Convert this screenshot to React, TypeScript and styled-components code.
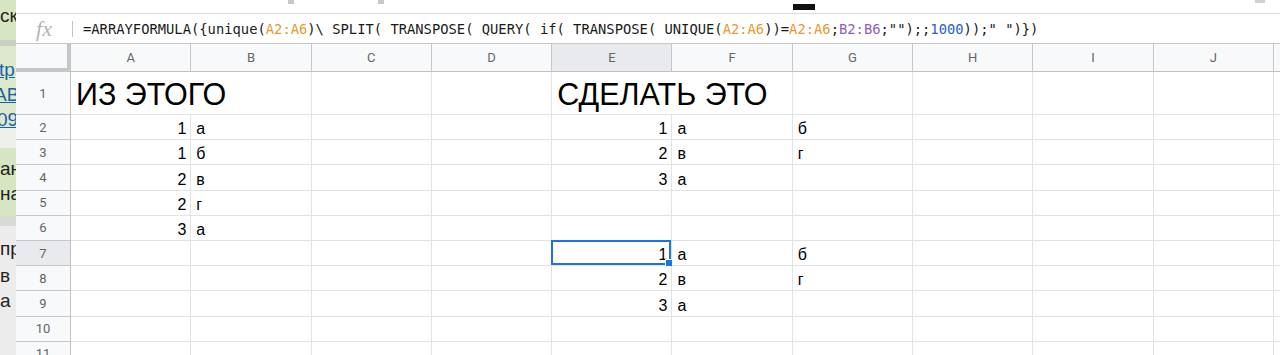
import React from 'react';
import styled, { createGlobalStyle } from 'styled-components';

const GlobalStyle = createGlobalStyle`
  html, body { margin: 0; padding: 0; background: #fff; }
  body {
    width: 1280px;
    height: 355px;
    overflow: hidden;
    font-family: "Liberation Sans", Arial, sans-serif;
  }
`;

const COLS = ['A', 'B', 'C', 'D', 'E', 'F', 'G', 'H', 'I', 'J', ''];
const ROWS = [1, 2, 3, 4, 5, 6, 7, 8, 9, 10, 11];

type CellData = { text: string; right?: boolean; big?: boolean; span?: number };

const DATA: Record<string, CellData> = {
  A1: { text: 'ИЗ ЭТОГО', big: true, span: 2 },
  E1: { text: 'СДЕЛАТЬ ЭТО', big: true, span: 2 },
  A2: { text: '1', right: true }, B2: { text: 'а' },
  A3: { text: '1', right: true }, B3: { text: 'б' },
  A4: { text: '2', right: true }, B4: { text: 'в' },
  A5: { text: '2', right: true }, B5: { text: 'г' },
  A6: { text: '3', right: true }, B6: { text: 'а' },
  E2: { text: '1', right: true }, F2: { text: 'а' }, G2: { text: 'б' },
  E3: { text: '2', right: true }, F3: { text: 'в' }, G3: { text: 'г' },
  E4: { text: '3', right: true }, F4: { text: 'а' },
  E7: { text: '1', right: true }, F7: { text: 'а' }, G7: { text: 'б' },
  E8: { text: '2', right: true }, F8: { text: 'в' }, G8: { text: 'г' },
  E9: { text: '3', right: true }, F9: { text: 'а' },
};

const SELECTED = { col: 'E', row: 7 };

const Page = styled.div`
  display: flex;
  width: 1280px;
  height: 355px;
  overflow: hidden;
`;

/* sliver of the browser window behind the spreadsheet */
const BehindStrip = styled.div`
  width: 16px;
  flex-shrink: 0;
  display: flex;
  flex-direction: column;
  overflow: hidden;
  box-shadow: inset -2px 0 2px rgba(0, 0, 0, 0.18);
  font-size: 19px;
  color: #222;
`;

const StripBlock = styled.div<{ $h: number; $bg: string; $pad?: number }>`
  height: ${(p) => p.$h}px;
  flex-shrink: 0;
  background: ${(p) => p.$bg};
  padding-top: ${(p) => p.$pad ?? 0}px;
  box-sizing: border-box;
  white-space: nowrap;
`;

const StripLine = styled.div<{ $link?: boolean; $shift?: number }>`
  height: 25px;
  line-height: 25px;
  margin-left: ${(p) => p.$shift ?? 0}px;
  color: ${(p) => (p.$link ? '#1b5fa8' : '#222')};
  text-decoration: ${(p) => (p.$link ? 'underline' : 'none')};
`;

const Sheet = styled.div`
  flex: 1;
  display: flex;
  flex-direction: column;
  min-width: 0;
  overflow: hidden;
`;

const Toolbar = styled.div`
  height: 14px;
  flex-shrink: 0;
  box-sizing: border-box;
  border-bottom: 1px solid #dadce0;
  display: flex;
  align-items: flex-start;
`;

const ToolMark = styled.div<{ $w: number; $h: number; $c: string; $ml: number; $mt?: number }>`
  width: ${(p) => p.$w}px;
  height: ${(p) => p.$h}px;
  background: ${(p) => p.$c};
  margin-left: ${(p) => p.$ml}px;
  margin-top: ${(p) => p.$mt ?? 0}px;
  flex-shrink: 0;
`;

const FormulaBar = styled.div`
  height: 30px;
  flex-shrink: 0;
  display: flex;
  align-items: center;
  border-bottom: 1px solid #c7c7c7;
  box-sizing: border-box;
`;

const FxIcon = styled.div`
  width: 56px;
  text-align: center;
  font-family: "Liberation Serif", serif;
  font-style: italic;
  font-size: 22px;
  color: #b4b4b4;
`;

const FxDivider = styled.div`
  width: 1px;
  height: 16px;
  background: #c4c4c4;
`;

const FormulaText = styled.div`
  padding: 1px 0 0 10px;
  font-family: "DejaVu Sans Mono", "Liberation Mono", monospace;
  font-size: 13.8px;
  color: #1a1a1a;
  white-space: nowrap;
`;

const Ref = styled.span<{ $c: string }>`
  color: ${(p) => p.$c};
`;

const Grid = styled.div`
  flex-shrink: 0;
  display: grid;
  grid-template-columns: 55px repeat(10, 120.3px) 1fr;
  grid-template-rows: 28px 43px repeat(10, 25.2px);
`;

const Corner = styled.div`
  background: #f8f9fa;
  border-right: 4px solid #c4c7c5;
  border-bottom: 4px solid #c4c7c5;
  box-sizing: border-box;
`;

const ColHead = styled.div<{ $active: boolean }>`
  background: ${(p) => (p.$active ? '#e8eaed' : '#f8f9fa')};
  border-right: 1px solid #c7c7c7;
  border-bottom: 1px solid #c0c0c0;
  box-sizing: border-box;
  display: flex;
  align-items: center;
  justify-content: center;
  font-family: Roboto, "Liberation Sans", sans-serif;
  font-size: 13px;
  color: #666;
`;

const RowHead = styled.div<{ $active: boolean }>`
  background: ${(p) => (p.$active ? '#e8eaed' : '#f8f9fa')};
  border-right: 1px solid #c0c0c0;
  border-bottom: 1px solid #c7c7c7;
  box-sizing: border-box;
  display: flex;
  align-items: center;
  justify-content: center;
  font-family: Roboto, "Liberation Sans", sans-serif;
  font-size: 13px;
  color: #666;
`;

const Cell = styled.div<{ $right?: boolean; $big?: boolean; $span?: number }>`
  grid-column: span ${(p) => p.$span ?? 1};
  position: relative;
  border-right: 1px solid #e2e3e3;
  border-bottom: 1px solid #e2e3e3;
  box-sizing: border-box;
  display: flex;
  align-items: flex-end;
  justify-content: ${(p) => (p.$right ? 'flex-end' : 'flex-start')};
  padding: 0 4px ${(p) => (p.$big ? 5 : 2)}px 5px;
  font-size: ${(p) => (p.$big ? 30.5 : 16)}px;
  line-height: 1;
  color: #000;
  white-space: nowrap;
`;

const Selection = styled.div`
  position: absolute;
  left: -1px;
  top: -1px;
  right: 0;
  bottom: 0;
  border: 2px solid #1a73e8;
  pointer-events: none;
`;

const Handle = styled.div`
  position: absolute;
  right: -4px;
  bottom: -4px;
  width: 6px;
  height: 6px;
  background: #1a73e8;
  border: 1px solid #fff;
`;

const ORANGE = '#e69a2e';
const PURPLE = '#8e5fc4';
const BLUE = '#2a62c9';

const Formula = () => (
  <FormulaText>
    =ARRAYFORMULA({'{'}unique(<Ref $c={ORANGE}>A2:A6</Ref>)\ SPLIT( TRANSPOSE( QUERY( if( TRANSPOSE( UNIQUE(
    <Ref $c={ORANGE}>A2:A6</Ref>))=<Ref $c={ORANGE}>A2:A6</Ref>;<Ref $c={PURPLE}>B2:B6</Ref>;"");;
    <Ref $c={BLUE}>1000</Ref>));" "){'}'})
  </FormulaText>
);

export default function App() {
  const cells: React.ReactNode[] = [];
  cells.push(<Corner key="corner" />);
  COLS.forEach((c) =>
    cells.push(
      <ColHead key={`h${c || 'K'}`} $active={c === SELECTED.col}>
        {c}
      </ColHead>
    )
  );
  ROWS.forEach((r) => {
    cells.push(
      <RowHead key={`r${r}`} $active={r === SELECTED.row}>
        {r}
      </RowHead>
    );
    let skip = 0;
    COLS.forEach((c) => {
      if (skip > 0) {
        skip--;
        return;
      }
      const id = `${c || 'K'}${r}`;
      const d = DATA[id];
      if (d?.span) skip = d.span - 1;
      const sel = c === SELECTED.col && r === SELECTED.row;
      cells.push(
        <Cell key={id} $right={d?.right} $big={d?.big} $span={d?.span}>
          {d?.text}
          {sel && (
            <Selection>
              <Handle />
            </Selection>
          )}
        </Cell>
      );
    });
  });

  return (
    <>
      <GlobalStyle />
      <Page>
        <BehindStrip>
          <StripBlock $h={40} $bg="#d6e6c3" $pad={3}>
            <StripLine>ск</StripLine>
          </StripBlock>
          <StripBlock $h={6} $bg="#c9cfc4" />
          <StripBlock $h={82} $bg="#dbe9ca" $pad={11}>
            <StripLine $link $shift={-1}>tp</StripLine>
            <StripLine $link $shift={-6}>AB</StripLine>
            <StripLine $link $shift={-3}>09</StripLine>
          </StripBlock>
          <StripBlock $h={20} $bg="#eef0ec" />
          <StripBlock $h={68} $bg="#d6e6c3" $pad={8}>
            <StripLine>ан</StripLine>
            <StripLine>на</StripLine>
          </StripBlock>
          <StripBlock $h={10} $bg="#d8dad6" />
          <StripBlock $h={129} $bg="#ececec" $pad={10}>
            <StripLine>пр</StripLine>
            <StripLine style={{ marginTop: 2 }}>в г</StripLine>
            <StripLine>а г</StripLine>
          </StripBlock>
        </BehindStrip>
        <Sheet>
          <Toolbar>
            <ToolMark $w={6} $h={4} $c="#c8c8c8" $ml={272} />
            <ToolMark $w={6} $h={4} $c="#c8c8c8" $ml={84} />
            <ToolMark $w={22} $h={6} $c="#111" $ml={409} $mt={4} />
            <ToolMark $w={10} $h={3} $c="#d0d0d0" $ml={440} />
          </Toolbar>
          <FormulaBar>
            <FxIcon>fx</FxIcon>
            <FxDivider />
            <Formula />
          </FormulaBar>
          <Grid>{cells}</Grid>
        </Sheet>
      </Page>
    </>
  );
}
